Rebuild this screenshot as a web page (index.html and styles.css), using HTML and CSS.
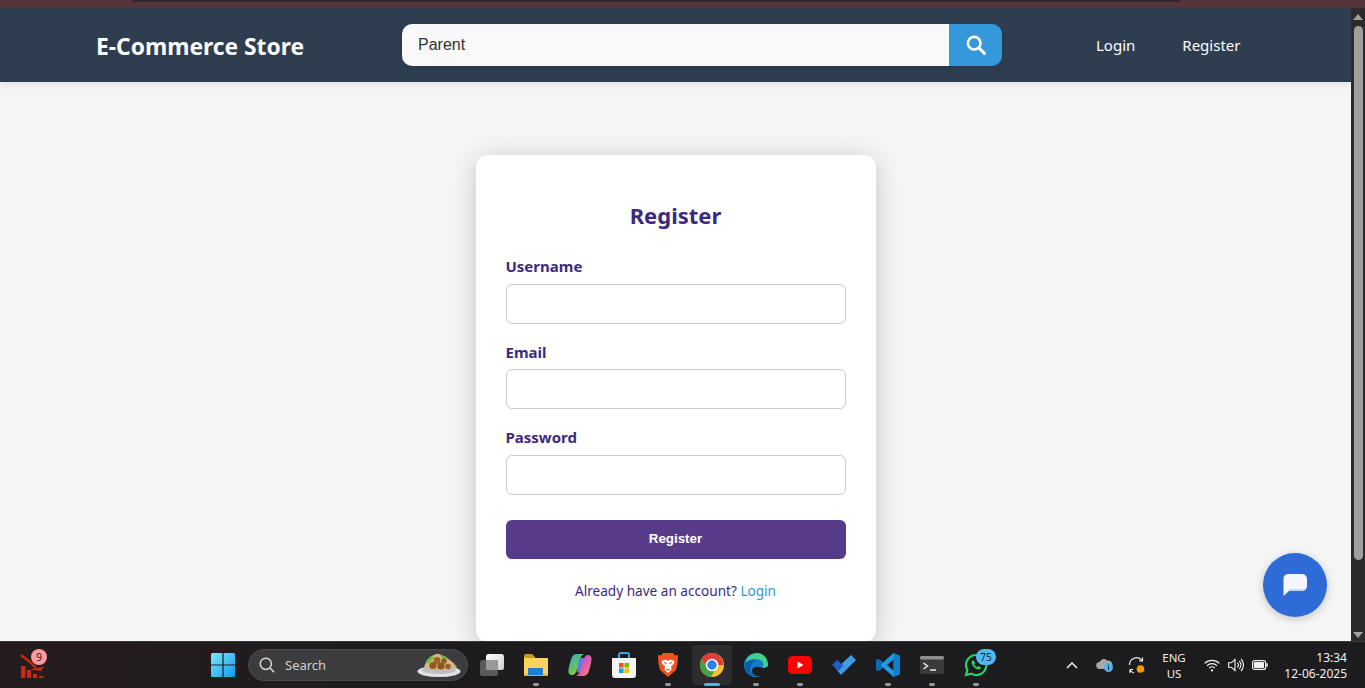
FILE: index.html
```html
<!DOCTYPE html>
<html lang="en">
  <head>
    <meta charset="UTF-8" />
    <meta name="viewport" content="width=device-width, initial-scale=1.0" />
    <title>E-Commerce Store</title>
    <link rel="stylesheet" href="styles.css">
  </head>
  <body>
    <div class="tab-strip"><div class="tab-edge"></div></div>

    <div class="window">
      <div class="page">
        <!-- Navbar -->
        <header class="navbar">
          <a class="logo" href="#">E-Commerce Store</a>
          <form class="search-form">
            <input class="search-input" type="text" value="Parent" />
            <button class="search-btn" type="button" aria-label="Search">
              <svg width="20" height="20" viewBox="0 0 20 20" fill="none" stroke="#fff">
                <circle cx="8.2" cy="8.2" r="6.3" stroke-width="2.6" />
                <path d="M12.8 12.8L18.4 18.4" stroke-width="3" stroke-linecap="round" />
              </svg>
            </button>
          </form>
          <nav class="nav-links">
            <a href="#">Login</a>
            <a href="#">Register</a>
          </nav>
        </header>

        <!-- Register card -->
        <main class="content">
          <form class="card">
            <h2 class="card-title">Register</h2>
            <div class="form-group">
              <label for="username">Username</label>
              <input id="username" type="text" />
            </div>
            <div class="form-group">
              <label for="email">Email</label>
              <input id="email" type="email" />
            </div>
            <div class="form-group">
              <label for="password">Password</label>
              <input id="password" type="password" />
            </div>
            <button class="submit-btn" type="button">Register</button>
            <p class="card-foot">Already have an account? <a href="#">Login</a></p>
          </form>
        </main>

        <button class="chat-btn" type="button" aria-label="Chat">
          <svg width="26" height="24" viewBox="0 0 26 24">
            <path fill="#f4f7fe" d="M6 1h14a5 5 0 0 1 5 5v7a5 5 0 0 1-5 5H7l-5.500 5V6a5 5 0 0 1 4.500-5z" />
            <path fill="#c9d8f5" d="M7 18h13a5 5 0 0 0 4-2H5.500z" />
          </svg>
        </button>
      </div>

      <div class="scrollbar">
        <span class="arrow-up"></span>
        <span class="thumb"></span>
        <span class="arrow-down"></span>
      </div>
    </div>

    <!-- Windows taskbar -->
    <footer class="taskbar">
      <div class="widget">
        <svg width="26" height="26" viewBox="0 0 26 26">
          <path d="M1 1l10 8 5 5" fill="none" stroke="#c7290f" stroke-width="2.400" />
          <path d="M10 15.500l14-3-3 4.500z" fill="#c7290f" />
          <path fill="#c7290f" d="M1 12h4.500v12H1zM7 16h4v8H7zM13 20h4v4h-4zM19 22h4.500v2H19z" />
        </svg>
        <span class="widget-badge">9</span>
      </div>

      <div class="task-center">
        <span class="slot start">
          <svg width="24" height="24" viewBox="0 0 24 24">
            <defs>
              <linearGradient id="winA" x1="0" y1="0" x2="1" y2="1">
                <stop offset="0" stop-color="#7be6ff" />
                <stop offset="1" stop-color="#0f9be8" />
              </linearGradient>
            </defs>
            <path fill="url(#winA)" d="M0 1.500A1.500 1.500 0 0 1 1.500 0h9.900v11.400H0zM12.600 0h9.900A1.500 1.500 0 0 1 24 1.500v9.900H12.600zM0 12.600h11.400V24H1.500A1.500 1.500 0 0 1 0 22.500zM12.600 12.600H24v9.900a1.500 1.500 0 0 1-1.500 1.500h-9.900z" />
          </svg>
        </span>

        <div class="task-search">
          <svg width="16" height="16" viewBox="0 0 16 16" fill="none" stroke="#d8d8d8">
            <circle cx="6.800" cy="6.800" r="5.600" stroke-width="1.500" />
            <path d="M11 11l4.200 4.200" stroke-width="1.600" />
          </svg>
          <span class="task-search-text">Search</span>
          <svg class="food" width="44" height="26" viewBox="0 0 44 26">
            <ellipse cx="22" cy="19.500" rx="21.500" ry="5.500" fill="#dfe3e6" />
            <ellipse cx="22" cy="18" rx="17" ry="4" fill="#b9bfc4" />
            <path d="M7 15C10 6 18 1 22 2c8 3 14 8 18 13-8 4-25 5-33 0z" fill="#d3b888" />
            <path d="M9 9l5-5 3 2-6 6zM23 3l7 2-2 5z" fill="#76b83f" />
            <circle cx="16" cy="13.500" r="3.600" fill="#8f5a22" />
            <circle cx="24" cy="14" r="3.600" fill="#8a5520" />
            <circle cx="20" cy="8.500" r="3.400" fill="#9c6527" />
            <circle cx="27" cy="9" r="2.800" fill="#8f5a22" />
            <circle cx="31" cy="14.500" r="2.800" fill="#96602a" />
          </svg>
        </div>

        <div class="slots">
          <span class="slot">
            <svg width="24" height="22" viewBox="0 0 24 22">
              <defs>
                <linearGradient id="viewA" x1="0" y1="0" x2="1" y2="1">
                  <stop offset="0" stop-color="#fff" />
                  <stop offset="1" stop-color="#cfcfcf" />
                </linearGradient>
              </defs>
              <rect x="0" y="6" width="18" height="16" rx="2.500" fill="#5a5a5a" />
              <rect x="6" y="0" width="18" height="16" rx="2.500" fill="url(#viewA)" />
              <path d="M6 6h12v10H8.500A2.500 2.500 0 0 1 6 13.500z" fill="#989898" />
            </svg>
          </span>
          <span class="slot running">
            <svg width="24" height="22" viewBox="0 0 24 22">
              <path d="M0 2a2 2 0 0 1 2-2h6l3 3v2H0z" fill="#c99a12" />
              <path d="M0 4h24v17a1 1 0 0 1-1 1H1a1 1 0 0 1-1-1z" fill="#fbd35c" />
              <path d="M0 20.500h24v.5a1 1 0 0 1-1 1H1a1 1 0 0 1-1-1z" fill="#e0a915" />
              <path d="M4 15a1 1 0 0 1 1-1h13a1 1 0 0 1 1 1v6H4z" fill="#1f7fd0" />
            </svg>
          </span>
          <span class="slot">
            <svg width="24" height="24" viewBox="0 0 24 24">
              <defs>
                <linearGradient id="copA" x1="0" y1="0" x2="1" y2="1">
                  <stop offset="0" stop-color="#2fa6e8" />
                  <stop offset="0.500" stop-color="#65c25a" />
                  <stop offset="1" stop-color="#f5c43c" />
                </linearGradient>
                <linearGradient id="copB" x1="0" y1="0" x2="1" y2="1">
                  <stop offset="0" stop-color="#8a5ce6" />
                  <stop offset="0.600" stop-color="#e85ca8" />
                  <stop offset="1" stop-color="#f59a4c" />
                </linearGradient>
              </defs>
              <path fill="url(#copA)" d="M9 1h8c-2 0-3.500 1.500-4.500 4L9 17c-1 3-3 5-5 5-2.500 0-4-2-3.500-5 .5-4 2-9 3-12C4.500 2.500 6.500 1 9 1z" />
              <path fill="url(#copB)" d="M15 23H7c2 0 3.500-1.500 4.500-4L15 7c1-3 3-5 5-5 2.500 0 4 2 3.500 5-.5 4-2 9-3 12-1 2.500-3 4-5.500 4z" />
              <path fill="#5f7fe6" d="M11 5h5l-.5 2-3.500 11.500-3 1.500z" />
            </svg>
          </span>
          <span class="slot">
            <svg width="24" height="26" viewBox="0 0 24 26">
              <path d="M7 7V3a2 2 0 0 1 2-2h6a2 2 0 0 1 2 2v4" fill="none" stroke="#35a7e8" stroke-width="2" />
              <path d="M0 6h24v17a3 3 0 0 1-3 3H3a3 3 0 0 1-3-3z" fill="#f4f4f4" />
              <path fill="#f25022" d="M7 11h4.600v4.600H7z" />
              <path fill="#7fba00" d="M12.400 11H17v4.600h-4.600z" />
              <path fill="#00a4ef" d="M7 16.400h4.600V21H7z" />
              <path fill="#ffb900" d="M12.400 16.400H17V21h-4.600z" />
            </svg>
          </span>
          <span class="slot running">
            <svg width="20" height="24" viewBox="0 0 20 24">
              <path d="M5 0h10l2.200 2.400L20 2l-.4 8-1.600 7-8 7-8-7-1.600-7L0 2l2.800.4z" fill="#f0511f" />
              <path d="M3.500 8L8 6.500l2 1.500 2-1.500L16.500 8l-.8 3-2.700 2.500.5 3L10 20l-3.500-3.500.5-3L4.300 11z" fill="#fff" />
              <path d="M6 9.500l2.500 1M14 9.500l-2.500 1M8.500 16l1.500 1 1.500-1" fill="none" stroke="#f0511f" stroke-width="1.100" />
            </svg>
          </span>
          <span class="slot active">
            <svg width="24" height="24" viewBox="0 0 24 24">
              <circle cx="12" cy="12" r="12" fill="#fbc02d" />
              <path d="M12 0a12 12 0 0 0-10.400 6L7 15l5-3h11.400A12 12 0 0 0 12 0z" fill="#e53935" />
              <path d="M1.600 6A12 12 0 0 0 11 24l5-9-9 0z" fill="#43a047" />
              <circle cx="12" cy="12" r="5.500" fill="#2f7fe8" stroke="#fff" stroke-width="1.600" />
            </svg>
          </span>
          <span class="slot running">
            <svg width="24" height="24" viewBox="0 0 24 24">
              <path d="M24 12a12 12 0 1 0-7 11c-4 1-9-1-9-5 0-3 3-5 7-4 4 1 9 0 9-2z" fill="#0f7fc9" />
              <path d="M1 10C3 4 8 0 13 0c6 0 11 5 11 12 0 2-3 3-6 3 2-2 2-5 0-7-4-3-13-3-17 2z" fill="#42d08a" />
              <path d="M1 10c3-3 8-4 11-2-3 1-6 4-6 8 0 3 2 6 5 7C5 23 0 18 1 10z" fill="#0c5fa8" />
            </svg>
          </span>
          <span class="slot running">
            <svg width="24" height="18" viewBox="0 0 24 18">
              <rect width="24" height="18" rx="4.500" fill="#f00" />
              <path d="M9.500 5.500l6 3.500-6 3.500z" fill="#fff" />
            </svg>
          </span>
          <span class="slot">
            <svg width="24" height="20" viewBox="0 0 24 20">
              <path d="M4 14L19 0l5 5L9 20z" fill="#3f9be8" />
              <path d="M0 10l5-5 6.500 5.500-5 5.500z" fill="#1d5fc7" />
            </svg>
          </span>
          <span class="slot running">
            <svg width="24" height="24" viewBox="0 0 24 24">
              <path d="M17.500 0L24 3v18l-6.500 3L7 14.500 2.500 18 0 16.500V7.500L2.500 6 7 9.500zM17.500 6.500L11 12l6.500 5.500z" fill="#1c9be6" />
              <path d="M17.500 0L24 3v18l-6.500 3z" fill="#0b7fcc" />
              <path d="M2.500 6L7 9.500 4.500 12 7 14.500 2.500 18 0 16.500V7.500z" fill="#0a6bb0" />
            </svg>
          </span>
          <span class="slot running">
            <svg width="24" height="18" viewBox="0 0 24 18">
              <rect width="24" height="18" rx="1.500" fill="#3a3a3a" />
              <rect width="24" height="3.500" rx="1.500" fill="#8f8f8f" />
              <path d="M3.500 7l4 3-4 3" fill="none" stroke="#e8e8e8" stroke-width="1.500" />
              <path d="M10 14h6" stroke="#e8e8e8" stroke-width="1.500" />
            </svg>
          </span>
          <span class="slot running">
            <svg width="24" height="24" viewBox="0 0 24 24">
              <path d="M12 2a10 10 0 0 0-8.600 15L2 22l5.200-1.400A10 10 0 1 0 12 2z" fill="none" stroke="#25d366" stroke-width="2.200" />
              <path d="M8.500 7.500c-1.200 1-1.200 2.800 0 4.800 1.300 2.200 3.300 3.800 5.500 4.200 1.500.2 2.800-.8 3-2l-2.700-1.400-1.200 1.200c-1.200-.5-2.400-1.700-3-3l1-1.200L9.700 7.500z" fill="#25d366" />
            </svg>
            <span class="app-badge">75</span>
          </span>
        </div>
      </div>

      <div class="tray">
        <svg class="tray-chevron" width="12" height="8" viewBox="0 0 12 8" fill="none" stroke="#f2f2f2" stroke-width="1.500">
          <path d="M1 7l5-5 5 5" />
        </svg>
        <svg class="tray-cloud" width="18" height="16" viewBox="0 0 18 16">
          <path d="M4 12a3.500 3.500 0 0 1-.5-7A4.500 4.500 0 0 1 11 3.500 3.500 3.500 0 0 1 13 12z" fill="#a8a8a8" />
          <circle cx="12.500" cy="10.500" r="4.500" fill="#4db2ee" />
          <path d="M12 9.500h1V13h-1zM12 7.800h1v1h-1z" fill="#12222e" />
        </svg>
        <svg class="tray-sync" width="18" height="18" viewBox="0 0 18 18" fill="none" stroke="#f2f2f2" stroke-width="1.200">
          <path d="M1.500 9A7 7 0 0 1 14 4.500" />
          <path d="M14.500 1.500v3.300h-3.300" />
          <path d="M2 13.500h3M2 13.500v3.500M2 14c1 1.500 2 2.500 4 3" />
          <circle cx="12.500" cy="13" r="3.800" fill="#ff9800" stroke="none" />
        </svg>
        <div class="lang"><span>ENG</span><span>US</span></div>
        <svg class="tray-wifi" width="16" height="13" viewBox="0 0 16 13" fill="none" stroke="#f2f2f2" stroke-width="1.200">
          <path d="M.6 4.400a10.500 10.500 0 0 1 14.800 0M2.900 6.800a7.200 7.200 0 0 1 10.200 0M5.200 9.100a4 4 0 0 1 5.600 0" />
          <circle cx="8" cy="11.400" r="1.100" fill="#f2f2f2" stroke="none" />
        </svg>
        <svg class="tray-sound" width="16" height="14" viewBox="0 0 16 14" fill="none" stroke="#f2f2f2" stroke-width="1.100">
          <path d="M.6 4.800h2.600L7 1.500v11L3.200 9.200H.6z" />
          <path d="M9.300 4.600a3.400 3.400 0 0 1 0 4.800M11.200 2.800a6 6 0 0 1 0 8.400M13 1a8.500 8.500 0 0 1 0 12" />
        </svg>
        <svg class="tray-battery" width="16" height="10" viewBox="0 0 16 10">
          <rect x=".6" y=".6" width="13" height="8.800" rx="2" fill="none" stroke="#f2f2f2" stroke-width="1.200" />
          <rect x="2" y="2" width="10" height="6" rx="1" fill="#f2f2f2" />
          <rect x="14.300" y="3.300" width="1.500" height="3.400" fill="#f2f2f2" />
        </svg>
        <div class="clock"><span>13:34</span><span>12-06-2025</span></div>
      </div>
    </footer>
  </body>
</html>
```

FILE: styles.css
```css
/* General Styling */
* {
  box-sizing: border-box;
}

html,
body {
  height: 100%;
}

body {
  margin: 0;
  display: flex;
  flex-direction: column;
  overflow: hidden;
  font-family: "Noto Sans", "Open Sans", sans-serif;
  background-color: #f5f5f5;
}

/* Browser edge above the page */
.tab-strip {
  flex: 0 0 8px;
  padding: 0 185px 0 133px;
  background-color: #55343a;
}

.tab-edge {
  height: 2px;
  background-color: #33242a;
}

.window {
  flex: 1;
  min-height: 0;
  display: flex;
}

.page {
  flex: 1;
  min-width: 0;
  position: relative;
  overflow: hidden;
}

/* Navbar */
.navbar {
  position: relative;
  z-index: 1;
  height: 74px;
  padding-left: 96px;
  display: flex;
  align-items: center;
  background-color: #2e3e50;
  box-shadow: 0px 2px 8px rgba(0, 0, 0, 0.1);
}

.logo {
  width: 306px;
  padding-top: 2px;
  font-size: 22.8px;
  font-weight: 700;
  color: #fff;
  text-decoration: none;
}

.search-form {
  width: 600px;
  height: 42px;
  display: flex;
  border-radius: 10px;
  overflow: hidden;
  box-shadow: 0px 2px 5px rgba(0, 0, 0, 0.1);
}

.search-input {
  flex: 1;
  min-width: 0;
  padding: 0 16px;
  border: none;
  outline: none;
  background-color: #f9f9f9;
  color: #333;
  font-family: "Liberation Sans", Arial, sans-serif;
  font-size: 16px;
}

.search-btn {
  width: 53px;
  padding: 0;
  border: none;
  display: flex;
  align-items: center;
  justify-content: center;
  background-color: #3498db;
}

.nav-links {
  margin-left: 94px;
  display: flex;
  gap: 47px;
}

.nav-links a {
  font-size: 15px;
  color: #fff;
  text-decoration: none;
}

/* Register card */
.content {
  display: flex;
  justify-content: center;
  padding-top: 73px;
}

.card {
  width: 400px;
  height: 487px;
  padding: 30px;
  border-radius: 12px;
  background: #fff;
  box-shadow: 0px 4px 24px rgba(0, 0, 0, 0.2);
}

.card-title {
  margin: 14px 0 23.4px;
  font-size: 22px;
  line-height: 32px;
  font-weight: 700;
  text-align: center;
  color: #3b2a80;
}

.form-group {
  margin-bottom: 15.7px;
}

.form-group label {
  display: block;
  margin-bottom: 5.6px;
  font-size: 15px;
  line-height: 24px;
  font-weight: 700;
  color: #3b2a80;
}

.form-group input {
  display: block;
  width: 100%;
  height: 40px;
  border: 1px solid #ccc;
  border-radius: 6px;
  outline: none;
  background: #fff;
}

.submit-btn {
  display: block;
  width: 100%;
  height: 39px;
  margin-top: 25px;
  padding: 0 0 1px;
  border: none;
  border-radius: 6px;
  background-color: #573b8a;
  color: #fff;
  font-family: "Liberation Sans", Arial, sans-serif;
  font-size: 13.33px;
  font-weight: 700;
}

.card-foot {
  margin: 22.4px 0 0;
  font-size: 13.6px;
  line-height: 20px;
  text-align: center;
  color: #3b2a80;
}

.card-foot a {
  color: #3498db;
  text-decoration: none;
}

/* Floating chat button */
.chat-btn {
  position: absolute;
  right: 24px;
  bottom: 24px;
  width: 64px;
  height: 64px;
  padding: 0;
  border: none;
  border-radius: 50%;
  display: flex;
  align-items: center;
  justify-content: center;
  background-color: #2d6cd6;
  box-shadow: 0px 2px 8px rgba(0, 0, 0, 0.2);
}

/* Scrollbar */
.scrollbar {
  flex: 0 0 14px;
  padding: 6px 0 3px;
  display: flex;
  flex-direction: column;
  align-items: center;
  background-color: #2b2b2b;
}

.arrow-up,
.arrow-down {
  width: 0;
  height: 0;
  border-left: 5px solid transparent;
  border-right: 5px solid transparent;
}

.arrow-up {
  border-bottom: 6px solid #a0a0a0;
}

.arrow-down {
  margin-top: auto;
  border-top: 6px solid #a0a0a0;
}

.thumb {
  width: 9px;
  height: 534px;
  margin-top: 6px;
  border-radius: 5px;
  background-color: #9f9f9f;
}

/* Taskbar */
.taskbar {
  flex: 0 0 47px;
  position: relative;
  display: flex;
  align-items: center;
  border-top: 1px solid #3b3b3b;
  background: linear-gradient(90deg, #261c1f 0%, #1d1b1e 30%, #1c1c1e 100%);
  font-family: "Noto Sans", "Open Sans", sans-serif;
  color: #f2f2f2;
}

.widget {
  position: absolute;
  left: 20px;
  top: 9px;
  width: 30px;
  height: 30px;
}

.widget svg {
  position: absolute;
  left: 0;
  top: 3px;
}

.widget-badge {
  position: absolute;
  left: 11px;
  top: -2px;
  width: 16px;
  height: 16px;
  border-radius: 50%;
  background-color: #ff9a9f;
  color: #1b1b1b;
  font-size: 10px;
  line-height: 16px;
  text-align: center;
}

.task-center {
  margin-left: 201px;
  display: flex;
  align-items: center;
}

.slots {
  margin-left: 2px;
  display: flex;
}

.slot {
  position: relative;
  width: 44px;
  height: 40px;
  display: flex;
  align-items: center;
  justify-content: center;
}

.slot.running::after,
.slot.active::after {
  content: "";
  position: absolute;
  left: 50%;
  bottom: -1px;
  width: 6px;
  height: 3px;
  margin-left: -3px;
  border-radius: 2px;
  background-color: #9a9a9a;
}

.slot.active {
  border-left: 2px solid transparent;
  border-right: 2px solid transparent;
  border-radius: 5px;
  background-color: #2d2d2f;
  background-clip: padding-box;
}

.slot.active::after {
  width: 16px;
  margin-left: -8px;
  background-color: #4fb3ee;
}

.app-badge {
  position: absolute;
  left: 22px;
  top: 4px;
  width: 20px;
  height: 16px;
  border-radius: 8px;
  background-color: #4fb8f5;
  color: #10222e;
  font-size: 10px;
  line-height: 16px;
  text-align: center;
}

.task-search {
  width: 220px;
  height: 32px;
  margin-left: 3px;
  padding: 0 6px 0 10px;
  display: flex;
  align-items: center;
  border: 1px solid #4a4a4a;
  border-radius: 16px;
  background-color: #3c3c3e;
}

.task-search-text {
  margin-left: 10px;
  font-size: 13px;
  color: #d0d0d0;
}

.food {
  margin-left: auto;
}

/* System tray */
.tray {
  position: absolute;
  top: 0;
  right: 0;
  bottom: 0;
  left: 1064px;
  display: flex;
  align-items: center;
}

.tray-chevron {
  margin-left: 2px;
}

.tray-cloud {
  margin-left: 18px;
}

.tray-sync {
  margin-left: 14px;
}

.lang {
  width: 40px;
  margin-left: 8px;
  padding-top: 2px;
  display: flex;
  flex-direction: column;
  align-items: center;
  font-size: 11.5px;
  line-height: 16px;
}

.tray-wifi {
  margin-left: 10px;
}

.tray-sound {
  margin-left: 8px;
}

.tray-battery {
  margin-left: 8px;
}

.clock {
  margin-left: auto;
  padding-top: 2px;
  padding-right: 18px;
  display: flex;
  flex-direction: column;
  align-items: flex-end;
  font-size: 12px;
  line-height: 16px;
}
```
